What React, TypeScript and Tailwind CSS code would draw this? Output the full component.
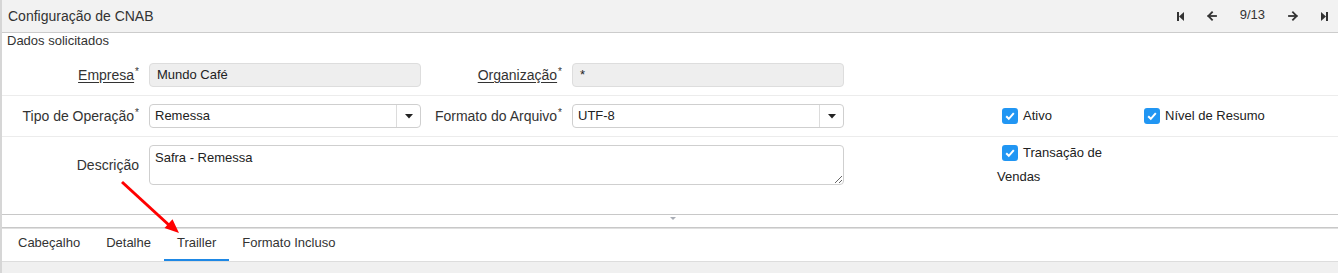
import React from 'react';

const font = "font-['Liberation_Sans',Arial,sans-serif]";

// ícones de navegação do cabeçalho
function StepIcon({ dir }: { dir: 'back' | 'fwd' }) {
  return (
    <svg width="7" height="9" viewBox="0 0 7 9" className="block">
      {dir === 'back' ? (
        <>
          <rect x="0" y="0" width="2" height="9" fill="#333" />
          <polygon points="7,0 7,9 2,4.5" fill="#333" />
        </>
      ) : (
        <>
          <polygon points="0,0 0,9 5,4.5" fill="#333" />
          <rect x="5" y="0" width="2" height="9" fill="#333" />
        </>
      )}
    </svg>
  );
}

function ArrowIcon({ dir }: { dir: 'left' | 'right' }) {
  return (
    <svg width="10" height="10" viewBox="0 0 10 10" className="block">
      <g stroke="#333" strokeWidth="1.8" fill="none" strokeLinecap="square">
        {dir === 'left' ? (
          <>
            <line x1="1.5" y1="5" x2="9" y2="5" />
            <polyline points="5,1.3 1.3,5 5,8.7" />
          </>
        ) : (
          <>
            <line x1="1" y1="5" x2="8.5" y2="5" />
            <polyline points="5,1.3 8.7,5 5,8.7" />
          </>
        )}
      </g>
    </svg>
  );
}

function Caret() {
  return (
    <svg width="8" height="5" viewBox="0 0 8 5" className="block">
      <polygon points="0,0 8,0 4,4.5" fill="#222" />
    </svg>
  );
}

function Label({ text, required, underline }: { text: string; required?: boolean; underline?: boolean }) {
  return (
    <span className="text-[14px] text-[#333] whitespace-nowrap">
      <span className={underline ? 'underline underline-offset-2' : ''}>{text}</span>
      {required && <sup className="text-[10px] ml-[1px]">*</sup>}
    </span>
  );
}

function Checkbox() {
  return (
    <span className="inline-flex h-[16px] w-[16px] items-center justify-center rounded-[3px] bg-[#2196f3] align-middle -mt-[2px]">
      <svg width="12" height="12" viewBox="0 0 12 12">
        <polyline points="2.2,6.2 4.8,8.8 9.8,3.2" fill="none" stroke="#fff" strokeWidth="2" />
      </svg>
    </span>
  );
}

function Select({ value }: { value: string }) {
  return (
    <div className="flex h-[24px] w-[272px] rounded-[4px] border border-[#cfcfcf] bg-white">
      <div className="flex flex-1 items-center pl-[5px] text-[13px] text-[#222]">{value}</div>
      <div className="flex w-[24px] items-center justify-center border-l border-[#dcdcdc]">
        <Caret />
      </div>
    </div>
  );
}

export default function App() {
  return (
    <div className={`relative h-[273px] w-[1338px] overflow-hidden bg-white ${font}`}>
      <div className="flex h-full flex-col border-l-2 border-[#d6d6d6]">
        {/* Cabeçalho */}
        <div className="flex h-[33px] items-center justify-between border-b border-[#cccccc] bg-[#f2f2f2] pl-[6px] pr-[10px]">
          <span className="text-[14px] text-[#333]">Configuração de CNAB</span>
          <div className="flex items-center gap-[23px]">
            <StepIcon dir="back" />
            <ArrowIcon dir="left" />
            <span className="-mt-[3px] text-[13px] text-[#333]">9/13</span>
            <ArrowIcon dir="right" />
            <StepIcon dir="fwd" />
          </div>
        </div>

        <div className="h-[16px] pl-[5px] text-[13px] leading-[16px] text-[#333]">Dados solicitados</div>

        {/* Linha 1 */}
        <div className="flex items-center border-b border-[#ececec] pt-[14px] pb-[8px]">
          <div className="w-[147px] pr-[10px] text-right">
            <Label text="Empresa" required underline />
          </div>
          <div className="flex h-[24px] w-[272px] items-center rounded-[4px] border border-[#dddddd] bg-[#eeeeee] pl-[7px] text-[13px] text-[#222]">
            Mundo Café
          </div>
          <div className="w-[151px] pr-[10px] text-right">
            <Label text="Organização" required underline />
          </div>
          <div className="flex h-[24px] w-[272px] items-center rounded-[4px] border border-[#dddddd] bg-[#eeeeee] pl-[7px] text-[13px] text-[#222]">
            *
          </div>
        </div>

        {/* Linha 2 */}
        <div className="flex items-center border-b border-[#ececec] pt-[8px] pb-[8px]">
          <div className="w-[147px] pr-[10px] text-right">
            <Label text="Tipo de Operação" required />
          </div>
          <Select value="Remessa" />
          <div className="w-[151px] pr-[10px] text-right">
            <Label text="Formato do Arquivo" required />
          </div>
          <Select value="UTF-8" />
          <div className="w-[153px]" />
          <div className="w-[142px] text-[13px] leading-[24px] text-[#222]">
            <span className="mx-[5px]"><Checkbox /></span>Ativo
          </div>
          <div className="w-[142px] text-[13px] leading-[24px] text-[#222]">
            <span className="mx-[5px]"><Checkbox /></span>Nível de Resumo
          </div>
        </div>

        {/* Linha 3 */}
        <div className="flex h-[77px] items-start pt-[4px]">
          <div className="mt-[4px] flex h-[40px] w-[147px] items-center justify-end pr-[10px]">
            <Label text="Descrição" />
          </div>
          <textarea
            readOnly
            defaultValue="Safra - Remessa"
            className="mt-[4px] h-[40px] w-[695px] rounded-[4px] border border-[#cfcfcf] px-[5px] pt-[3px] text-[13px] leading-[17px] text-[#222] outline-none"
          />
          <div className="w-[153px]" />
          <div className="w-[142px] text-[13px] leading-[24px] text-[#222]">
            <span className="mx-[5px]"><Checkbox /></span>Transação de Vendas
          </div>
        </div>

        {/* Divisor */}
        <div className="flex h-[14px] items-start justify-center border-y border-t-[#c8c8c8] border-b-[#c8c8c8] pl-[6px] pt-[2px]">
          <svg width="6" height="3" viewBox="0 0 6 3" className="block">
            <polygon points="0,0 6,0 3,3" fill="#a9adb5" />
          </svg>
        </div>

        {/* Abas */}
        <div className="flex h-[34px] border-y border-t-[#e0e0e0] border-b-[#dddddd] pl-[3px] text-[13px] text-[#333]">
          {['Cabeçalho', 'Detalhe', 'Trailler', 'Formato Incluso'].map((tab) => (
            <div
              key={tab}
              className={`flex h-full items-center border-b-2 px-[13px] pb-[2px] ${
                tab === 'Trailler' ? 'border-[#1e88e5]' : 'border-transparent'
              }`}
            >
              {tab}
            </div>
          ))}
        </div>

        <div className="flex-1 bg-[#f0f0f0]" />
      </div>

      {/* Seta vermelha de destaque */}
      <svg className="pointer-events-none absolute left-0 top-0" width="1338" height="273">
        <line x1="122" y1="182" x2="170" y2="226" stroke="#f00" strokeWidth="3" />
        <polygon points="179,233 164.5,228 172.5,219.3" fill="#f00" />
      </svg>
    </div>
  );
}
